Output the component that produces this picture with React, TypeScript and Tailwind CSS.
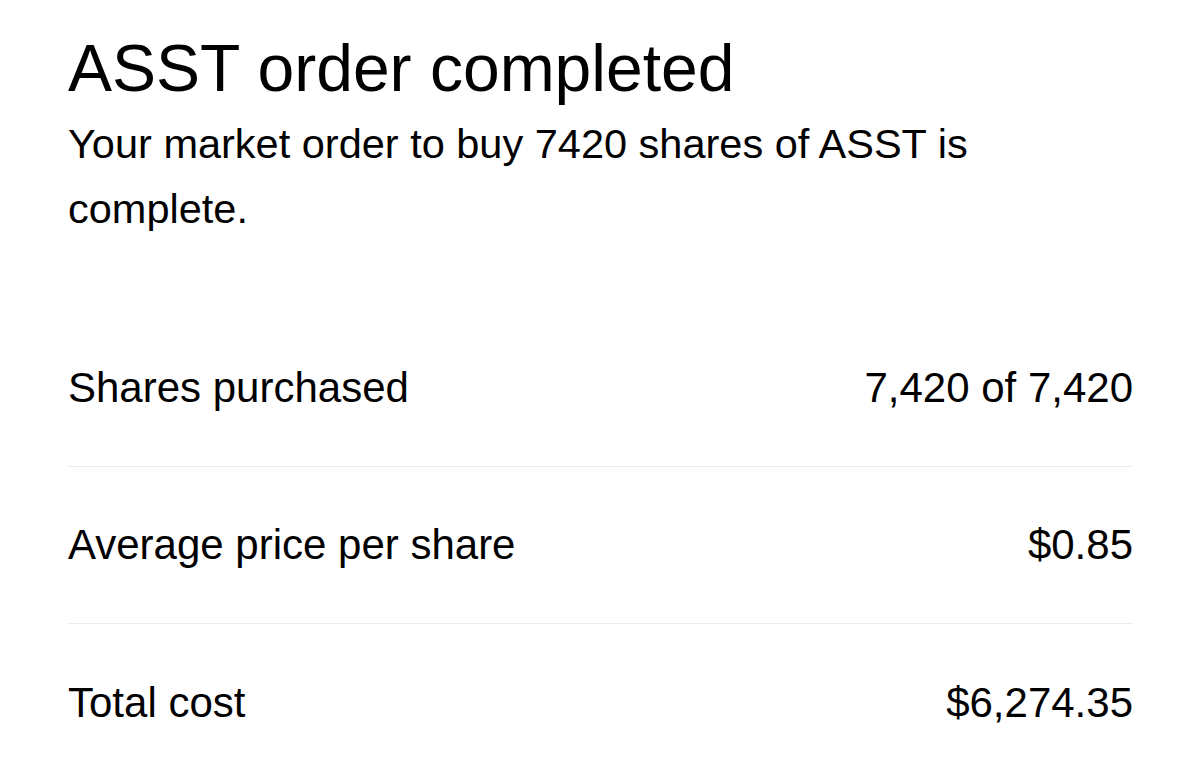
import React from "react";

const rows = [
  { label: "Shares purchased", value: "7,420 of 7,420" },
  { label: "Average price per share", value: "$0.85" },
  { label: "Total cost", value: "$6,274.35" },
];

export default function App() {
  return (
    <div className="w-[1200px] h-[777px] overflow-hidden bg-white text-black font-['Liberation_Sans',Arial,sans-serif]">
      <div className="pl-[68px] pr-[67px] pt-[35px]">
        <h1 className="text-[66px] leading-[66px] font-normal">ASST order completed</h1>
        <p className="mt-[10px] text-[41.5px] leading-[65px]">
          Your market order to buy 7420 shares of ASST is
          <br />
          complete.
        </p>
        <div className="mt-[69px] flex flex-col">
          {rows.map((r, i) => (
            <div
              key={r.label}
              className={
                i < rows.length - 1
                  ? "flex h-[157px] items-center justify-between border-b border-[#ececec]"
                  : "flex h-[157px] items-center justify-between"
              }
            >
              <span className="text-[42px] leading-[48px]">{r.label}</span>
              <span className="text-[42px] leading-[48px]">{r.value}</span>
            </div>
          ))}
        </div>
      </div>
    </div>
  );
}
